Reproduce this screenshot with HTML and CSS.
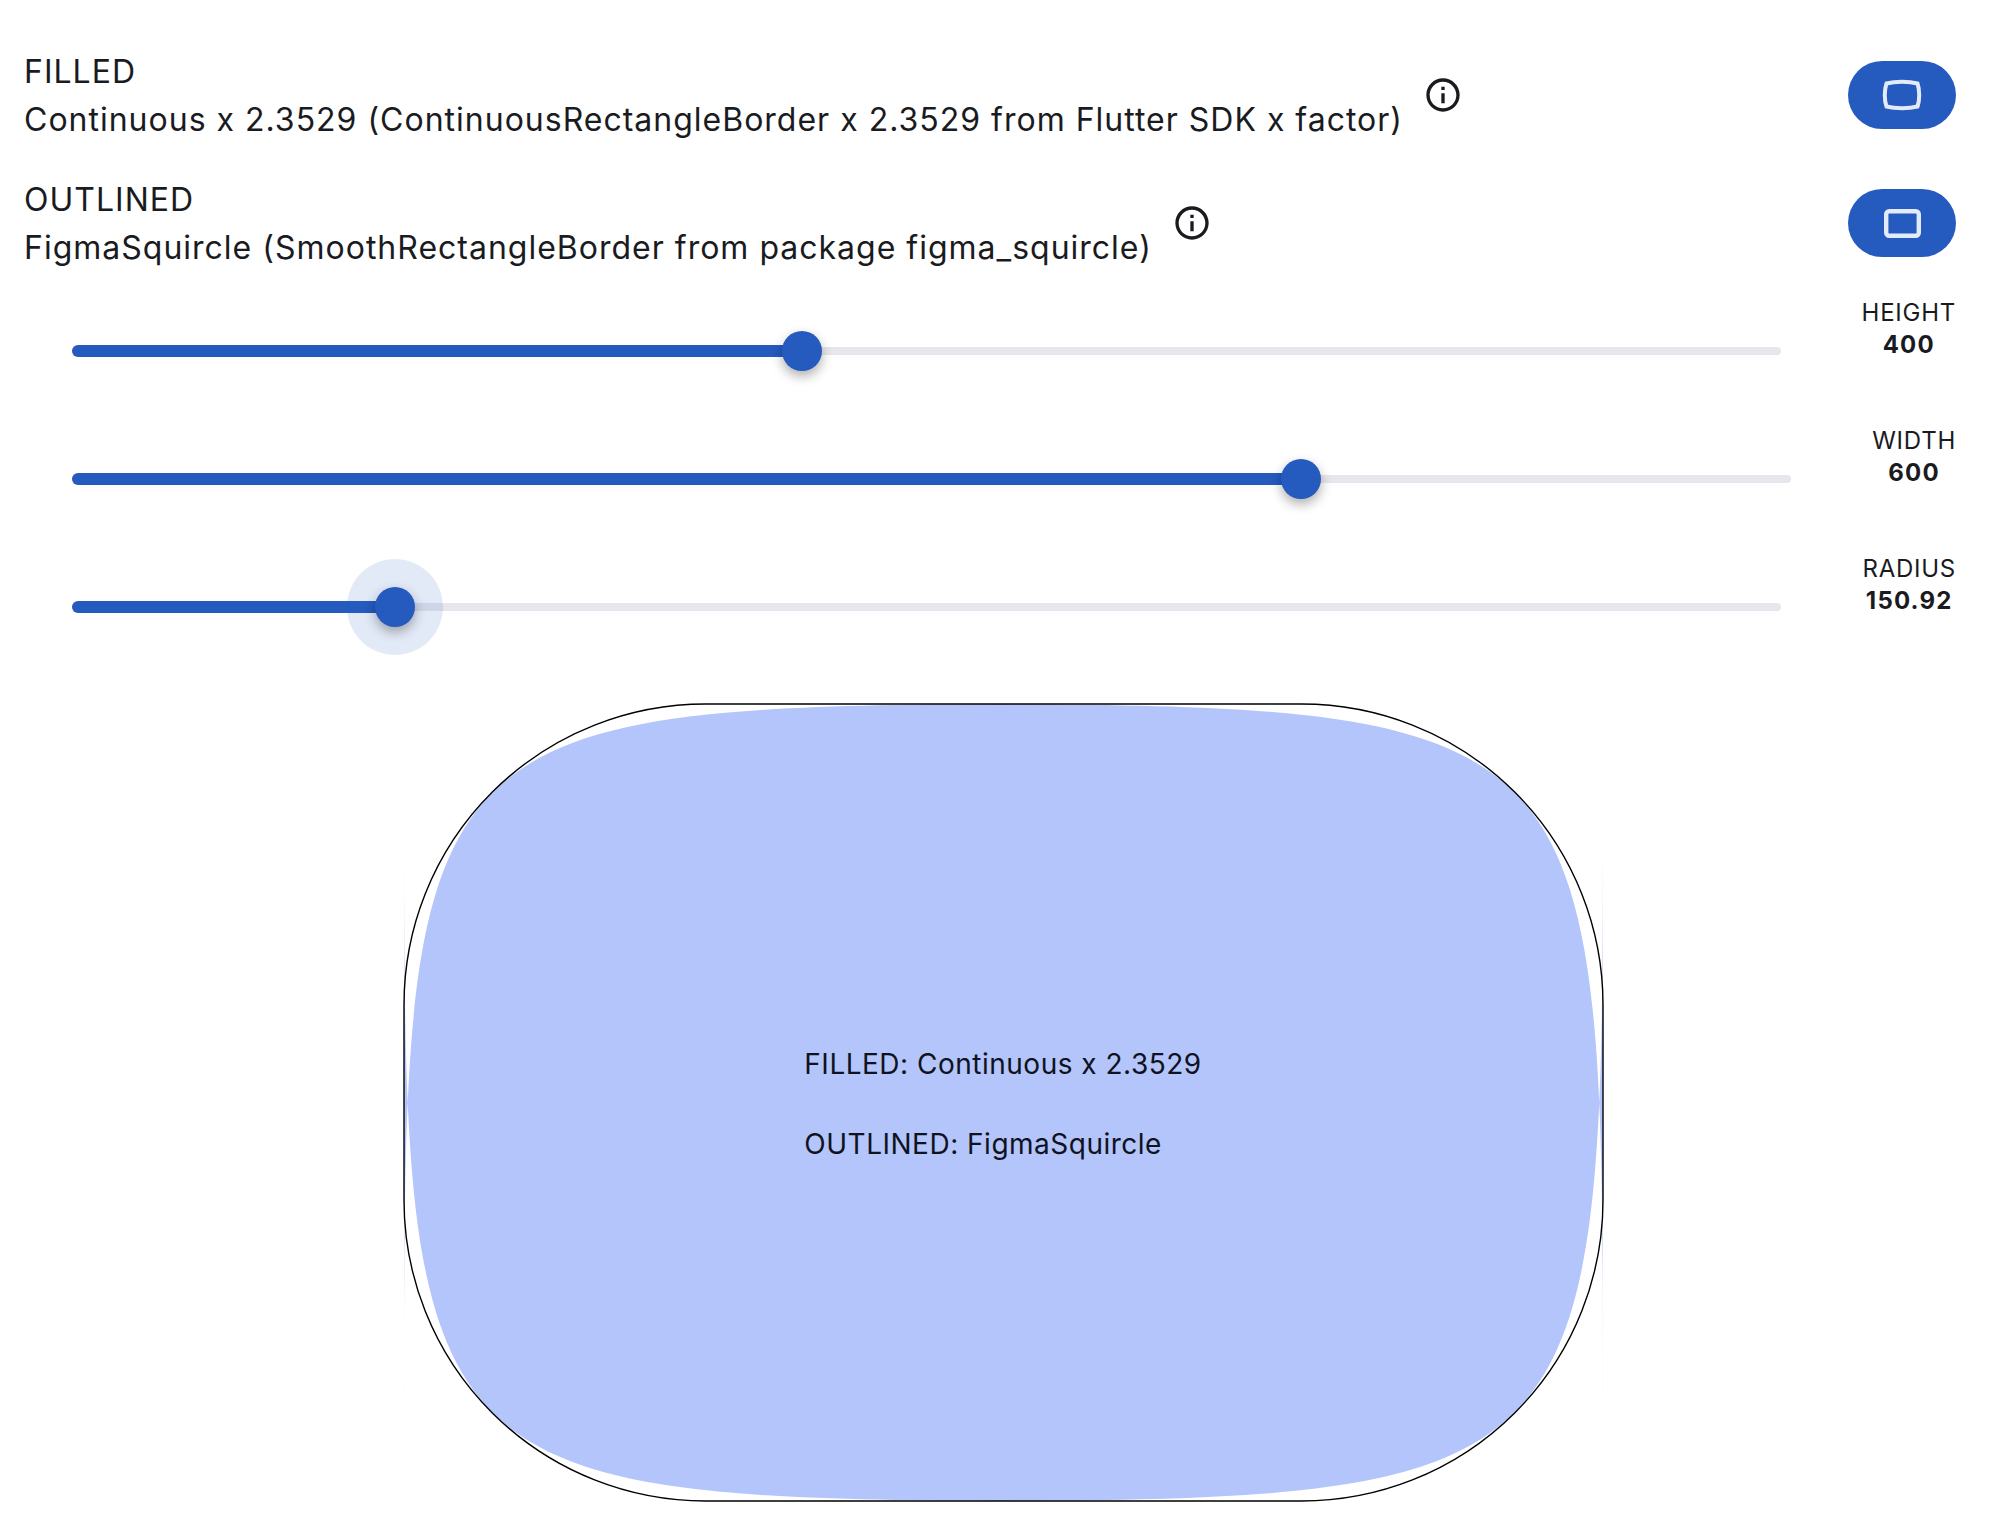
FILE: index.html
```html
<!DOCTYPE html>
<html lang="en">
<head>
<meta charset="utf-8">
<title>Squircle comparison</title>
<link rel="stylesheet" href="styles.css">
</head>
<body>
<main class="page">
  <section class="option">
    <div class="option-main">
      <div class="option-text">
        <div>FILLED</div>
        <div>Continuous x 2.3529 (ContinuousRectangleBorder x 2.3529 from Flutter SDK x factor)</div>
      </div>
      <svg class="info" viewBox="0 0 24 24"><path d="M11 7h2v2h-2zm0 4h2v6h-2zm1-9C6.48 2 2 6.48 2 12s4.48 10 10 10 10-4.48 10-10S17.52 2 12 2zm0 18c-4.41 0-8-3.59-8-8s3.59-8 8-8 8 3.59 8 8-3.59 8-8 8z"/></svg>
    </div>
    <button class="pill"><svg class="pill-icon" viewBox="0 0 40 32"><path d="M4.500 4.500C13 2.200 27 2.200 35.500 4.500C37.800 11 37.800 21 35.500 27.500C27 29.800 13 29.800 4.500 27.500C2.200 21 2.200 11 4.500 4.500Z"/></svg></button>
  </section>
  <section class="option">
    <div class="option-main">
      <div class="option-text">
        <div>OUTLINED</div>
        <div>FigmaSquircle (SmoothRectangleBorder from package figma_squircle)</div>
      </div>
      <svg class="info" viewBox="0 0 24 24"><path d="M11 7h2v2h-2zm0 4h2v6h-2zm1-9C6.48 2 2 6.48 2 12s4.48 10 10 10 10-4.48 10-10S17.52 2 12 2zm0 18c-4.41 0-8-3.59-8-8s3.59-8 8-8 8 3.59 8 8-3.59 8-8 8z"/></svg>
    </div>
    <button class="pill"><svg class="pill-icon pill-icon-plain" viewBox="0 0 37 29"><rect x="2.2" y="2.2" width="32.6" height="24.6" rx="3"/></svg></button>
  </section>

  <section class="controls">
    <div class="control">
      <div class="slider">
        <div class="track"></div>
        <div class="active" style="width:42.74%"></div>
        <div class="thumb" style="left:42.74%"></div>
      </div>
      <div class="readout"><div>HEIGHT</div><strong>400</strong></div>
    </div>
    <div class="control">
      <div class="slider">
        <div class="track"></div>
        <div class="active" style="width:71.5%"></div>
        <div class="thumb" style="left:71.5%"></div>
      </div>
      <div class="readout"><div>WIDTH</div><strong>600</strong></div>
    </div>
    <div class="control">
      <div class="slider">
        <div class="track"></div>
        <div class="active" style="width:18.9%"></div>
        <div class="halo" style="left:18.9%"></div>
        <div class="thumb" style="left:18.9%"></div>
      </div>
      <div class="readout"><div>RADIUS</div><strong>150.92</strong></div>
    </div>
  </section>

  <section class="stage">
    <div class="shape">
      <svg class="shape-art" viewBox="0 0 1200 800" preserveAspectRatio="none">
        <path class="shape-fill" d="M0 710C0 0 0 0 710 0L490 0C1200 0 1200 0 1200 710L1200 90C1200 800 1200 800 490 800L710 800C0 800 0 800 0 90Z"/>
        <rect class="shape-line" x="0" y="0" width="1200" height="800" rx="301.84" ry="301.84"/>
      </svg>
      <div class="shape-text">
        <div>FILLED: Continuous x 2.3529</div>
        <div>OUTLINED: FigmaSquircle</div>
      </div>
    </div>
  </section>
</main>
</body>
</html>
```
FILE: styles.css
```css
* { box-sizing: border-box; }
html, body { margin: 0; background: #fff; }
body {
  font-family: "Inter", "Liberation Sans", sans-serif;
  color: #1a1b1f;
}
.page {
  width: 2002px;
  height: 1540px;
  padding: 48px 46px 0 24px;
  overflow: hidden;
}
.option {
  display: flex;
  justify-content: space-between;
  align-items: flex-start;
  height: 128px;
}
.option-main { display: flex; align-items: flex-start; }
.option-text {
  font-size: 32px;
  line-height: 48px;
  letter-spacing: 1px;
  white-space: nowrap;
}
.info {
  width: 40px;
  height: 40px;
  margin: 27px 0 0 20px;
  fill: #1a1b1f;
  flex: none;
}
.pill {
  width: 108px;
  height: 68px;
  margin-top: 13px;
  padding: 0;
  border: 0;
  border-radius: 34px;
  background: #255abf;
  display: flex;
  align-items: center;
  justify-content: center;
}
.pill-icon {
  width: 40px;
  height: 32px;
  fill: none;
  stroke: #e3eaf8;
  stroke-width: 4;
  stroke-linejoin: miter;
}
.pill-icon-plain { width: 37px; height: 29px; stroke-width: 4.4; stroke-linejoin: round; }
.controls { margin-top: -17px; padding-left: 48px; }
.control {
  display: flex;
  align-items: flex-start;
  height: 128px;
}
.slider {
  position: relative;
  flex: 1;
  height: 12px;
  margin: 58px 81px 0 0;
}
.track {
  position: absolute;
  left: 0;
  right: 0;
  top: 2px;
  height: 8px;
  border-radius: 4px;
  background: #e8e6ec;
}
.active {
  position: absolute;
  left: 0;
  top: 0;
  height: 12px;
  border-radius: 6px 0 0 6px;
  background: #255abf;
}
.thumb, .halo {
  position: absolute;
  border-radius: 50%;
  transform: translate(-50%, -50%);
  top: 6px;
}
.thumb {
  width: 40px;
  height: 40px;
  background: #255abf;
  box-shadow: 0 5px 12px rgba(0, 0, 0, 0.32);
}
.halo {
  width: 96px;
  height: 96px;
  background: rgba(37, 90, 191, 0.13);
}
.readout {
  padding-top: 10px;
  font-size: 24px;
  line-height: 32px;
  letter-spacing: 0.75px;
  text-align: center;
}
.readout strong { display: block; font-weight: 700; letter-spacing: 1.2px; }
.stage {
  display: flex;
  justify-content: center;
  margin-top: 32.5px;
  padding-left: 26px;
}
.shape {
  position: relative;
  width: 1199px;
  height: 797px;
  display: flex;
  align-items: center;
  justify-content: center;
}
.shape-art {
  position: absolute;
  inset: 0;
  width: 100%;
  height: 100%;
  overflow: visible;
}
.shape-fill { fill: #b3c5fa; }
.shape-line {
  fill: none;
  stroke: #000;
  stroke-width: 1.4;
}
.shape-text {
  position: relative;
  display: flex;
  flex-direction: column;
  gap: 48px;
  padding-top: 4px;
  font-size: 28px;
  line-height: 32px;
  letter-spacing: 0.5px;
  color: #0f1220;
}
```
